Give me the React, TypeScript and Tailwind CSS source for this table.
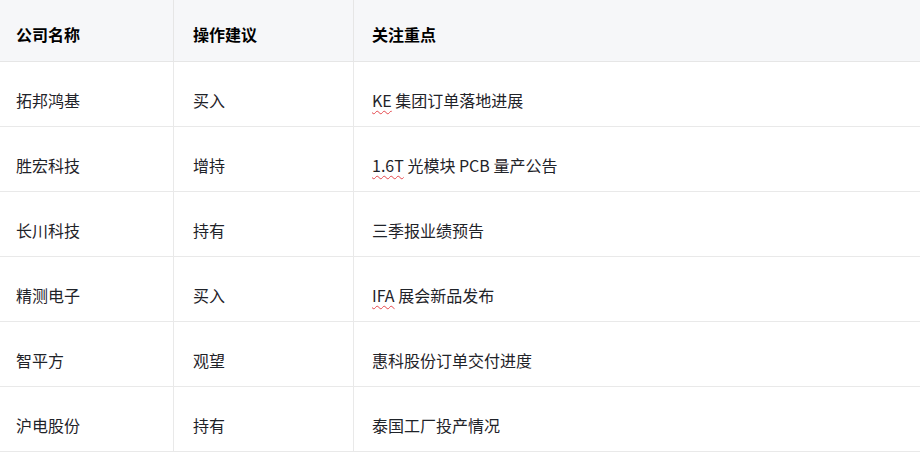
import React from "react";

function W({ children }: { children: React.ReactNode }) {
  return (
    <span className="underline decoration-wavy decoration-[#e5484d] decoration-1 underline-offset-[3px]">
      {children}
    </span>
  );
}

const rows: { name: string; op: string; focus: React.ReactNode }[] = [
  { name: "拓邦鸿基", op: "买入", focus: <><W>KE</W> 集团订单落地进展</> },
  { name: "胜宏科技", op: "增持", focus: <><W>1.6T</W> 光模块 PCB 量产公告</> },
  { name: "长川科技", op: "持有", focus: <>三季报业绩预告</> },
  { name: "精测电子", op: "买入", focus: <><W>IFA</W> 展会新品发布</> },
  { name: "智平方", op: "观望", focus: <>惠科股份订单交付进度</> },
  { name: "沪电股份", op: "持有", focus: <>泰国工厂投产情况</> },
];

export default function App() {
  const font = { fontFamily: '"Noto Sans CJK SC", "Noto Sans", sans-serif' };
  return (
    <div className="w-[920px] h-[452px] overflow-hidden bg-white text-[16px] text-[#1f2329]" style={font}>
      <div className="grid grid-cols-[174px_180px_1fr] bg-[#f6f7f9] border-b border-[#e6e6e6] font-bold text-black">
        <div className="border-r border-[#e6e6e6] h-[61px] pl-4 pt-[24px] leading-5">公司名称</div>
        <div className="border-r border-[#e6e6e6] h-[61px] pl-[19px] pt-[24px] leading-5">操作建议</div>
        <div className="h-[61px] pl-[18px] pt-[24px] leading-5">关注重点</div>
      </div>
      {rows.map((r) => (
        <div key={r.name} className="grid grid-cols-[174px_180px_1fr] border-b border-[#e9e9e9]">
          <div className="border-r border-[#e9e9e9] h-[64px] pl-4 pt-[28px] leading-5">{r.name}</div>
          <div className="border-r border-[#e9e9e9] h-[64px] pl-[19px] pt-[28px] leading-5">{r.op}</div>
          <div className="h-[64px] pl-[18px] pt-[28px] leading-5">{r.focus}</div>
        </div>
      ))}
    </div>
  );
}
